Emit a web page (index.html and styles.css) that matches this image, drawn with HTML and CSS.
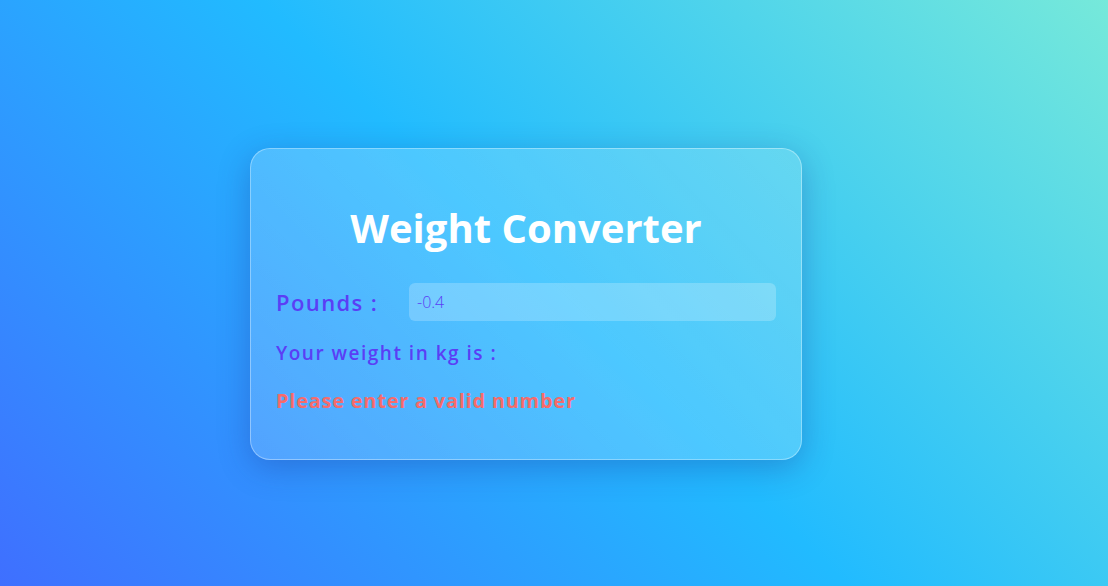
FILE: index.html
```html
<!DOCTYPE html>
<html lang="en">
<head>
<meta charset="UTF-8">
<title>Weight Converter</title>
<link rel="stylesheet" href="styles.css">
</head>
<body>
<main class="page">
  <section class="card">
    <h1 class="title">Weight Converter</h1>
    <div class="row">
      <label class="label" for="pounds">Pounds :</label>
      <input class="input" id="pounds" type="text" value="-0.4">
    </div>
    <p class="result">Your weight in kg is :</p>
    <p class="error">Please enter a valid number</p>
  </section>
</main>
</body>
</html>
```
FILE: styles.css
```css
* { box-sizing: border-box; }
html, body { margin: 0; height: 100%; }
body {
  font-family: "Open Sans", "Noto Sans", sans-serif;
  background: linear-gradient(45deg, #3f6fff 0%, #21bbff 50%, #76e9da 100%);
  overflow: hidden;
}
.page {
  height: 100%;
  display: flex;
  align-items: flex-start;
  justify-content: center;
  padding-top: 148px;
  padding-right: 56px;
}
.card {
  width: 552px;
  height: 312px;
  border-radius: 20px;
  background: linear-gradient(45deg, rgba(255,255,255,0.16), rgba(255,255,255,0.2) 50%, rgba(255,255,255,0.16));
  border: 1px solid rgba(255,255,255,0.35);
  box-shadow: 0 8px 32px rgba(31, 38, 135, 0.3);
  padding: 46px 25px 0 25px;
}
.title {
  margin: 0;
  text-align: center;
  color: #ffffff;
  font-size: 40px;
  font-weight: 700;
  line-height: 66px;
}
.row {
  display: flex;
  align-items: center;
  margin-top: 22px;
}
.label {
  width: 133px;
  color: #5b3ef5;
  font-size: 22px;
  font-weight: 600;
  letter-spacing: 1.4px;
}
.input {
  flex: 1;
  height: 38px;
  border: none;
  outline: none;
  border-radius: 6px;
  background: rgba(255,255,255,0.22);
  padding: 0 8px;
  font-family: "Open Sans", sans-serif;
  font-size: 16px;
  font-weight: 300;
  color: #5b3ef5;
}
.result {
  margin: 18px 0 0 0;
  color: #5b3ef5;
  font-size: 19px;
  font-weight: 600;
  letter-spacing: 1.5px;
  line-height: 28px;
}
.error {
  margin: 20px 0 0 0;
  color: #f66b6b;
  font-size: 20px;
  font-weight: 700;
  letter-spacing: 0.75px;
  line-height: 28px;
}
```
